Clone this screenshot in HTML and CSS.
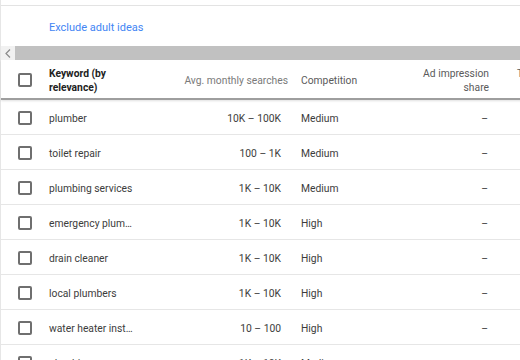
FILE: index.html
```html
<!DOCTYPE html>
<html lang="en">
  <head>
    <meta charset="UTF-8" />
    <meta name="viewport" content="width=device-width, initial-scale=1.0" />
    <title>Keyword ideas</title>
    <link rel="stylesheet" href="styles.css">
  </head>
  <body>
    <div class="panel">
      <div class="filters">
        <a class="link" href="#">Exclude adult ideas</a>
      </div>

      <div class="hscroll">
        <div class="hscroll-btn">
          <svg width="6" height="9" viewBox="0 0 6 9"><path d="M5 0.5 L1 4.5 L5 8.5" fill="none" stroke="#8a8a8a" stroke-width="1.2"/></svg>
        </div>
        <div class="hscroll-thumb"></div>
      </div>

      <div class="table">
        <div class="row head">
          <div class="cell check"><span class="box"></span></div>
          <div class="cell kw sorted">Keyword (by<br>relevance)</div>
          <div class="cell num searches">Avg. monthly searches</div>
          <div class="cell comp">Competition</div>
          <div class="cell num share">Ad impression<br>share</div>
          <div class="cell rest"><span class="rest-label">Top of page bid (low<br>range)</span></div>
        </div>

        <div class="row">
          <div class="cell check"><span class="box"></span></div>
          <div class="cell kw">plumber</div>
          <div class="cell num">10K – 100K</div>
          <div class="cell comp">Medium</div>
          <div class="cell num share">–</div>
          <div class="cell rest"></div>
        </div>
        <div class="row">
          <div class="cell check"><span class="box"></span></div>
          <div class="cell kw">toilet repair</div>
          <div class="cell num">100 – 1K</div>
          <div class="cell comp">Medium</div>
          <div class="cell num share">–</div>
          <div class="cell rest"></div>
        </div>
        <div class="row">
          <div class="cell check"><span class="box"></span></div>
          <div class="cell kw">plumbing services</div>
          <div class="cell num">1K – 10K</div>
          <div class="cell comp">Medium</div>
          <div class="cell num share">–</div>
          <div class="cell rest"></div>
        </div>
        <div class="row">
          <div class="cell check"><span class="box"></span></div>
          <div class="cell kw">emergency plum…</div>
          <div class="cell num">1K – 10K</div>
          <div class="cell comp">High</div>
          <div class="cell num share">–</div>
          <div class="cell rest"></div>
        </div>
        <div class="row">
          <div class="cell check"><span class="box"></span></div>
          <div class="cell kw">drain cleaner</div>
          <div class="cell num">1K – 10K</div>
          <div class="cell comp">High</div>
          <div class="cell num share">–</div>
          <div class="cell rest"></div>
        </div>
        <div class="row">
          <div class="cell check"><span class="box"></span></div>
          <div class="cell kw">local plumbers</div>
          <div class="cell num">1K – 10K</div>
          <div class="cell comp">High</div>
          <div class="cell num share">–</div>
          <div class="cell rest"></div>
        </div>
        <div class="row">
          <div class="cell check"><span class="box"></span></div>
          <div class="cell kw">water heater inst…</div>
          <div class="cell num">10 – 100</div>
          <div class="cell comp">High</div>
          <div class="cell num share">–</div>
          <div class="cell rest"></div>
        </div>
        <div class="row">
          <div class="cell check"><span class="box"></span></div>
          <div class="cell kw">plumbing</div>
          <div class="cell num">1K – 10K</div>
          <div class="cell comp">Medium</div>
          <div class="cell num share">–</div>
          <div class="cell rest"></div>
        </div>
      </div>
    </div>
  </body>
</html>
```

FILE: styles.css
```css
body {
  margin: 0;
  font-family: Roboto, "Liberation Sans", sans-serif;
  font-size: 10.3px;
  color: #3c3c3c;
  background: #ffffff;
  overflow: hidden;
}

.panel {
  width: 620px;
  border-left: 1px solid #e6e6e6;
  padding-top: 5px;
}

.filters {
  border-top: 1px solid #e3e3e3;
  height: 40px;
  display: flex;
  align-items: center;
  padding-left: 48px;
}

.link {
  color: #4285f4;
  text-decoration: none;
  font-size: 11px;
  padding-top: 2px;
}

.hscroll {
  display: flex;
  height: 14px;
}

.hscroll-btn {
  width: 14px;
  background: #f1f1f1;
  display: flex;
  align-items: center;
  justify-content: center;
}

.hscroll-thumb {
  flex: 1;
  background: #c1c1c1;
}

.row {
  display: grid;
  grid-template-columns: 48px 134px 106px 111px 97px 124px;
  height: 32px;
  padding-top: 2px;
  border-bottom: 1px solid #e6e6e6;
  align-items: center;
}

.row.head {
  height: 35px;
  padding-top: 3px;
  border-bottom: 2px solid #9e9e9e;
  box-shadow: 0 1px 2px rgba(0, 0, 0, 0.12);
  line-height: 14px;
  color: #666666;
}

.cell {
  white-space: nowrap;
}

.check {
  padding-left: 17px;
  display: flex;
}

.row .check {
  margin-top: -1px;
}

.head .check {
  margin-top: -1px;
}

.box {
  width: 10px;
  height: 10px;
  border: 2px solid #6f6f6f;
  border-radius: 2px;
}

.kw.sorted {
  font-weight: bold;
  color: #222222;
}

.num {
  text-align: right;
  padding-right: 8px;
}

.head .searches {
  padding-right: 1px;
  color: #7a7a7a;
}

.comp {
  padding-left: 12px;
}

.head .comp,
.head .share,
.head .rest {
  color: #5a5a5a;
}

.row .share {
  padding-right: 9px;
}

.head .share {
  padding-right: 8px;
}

.rest {
  padding-left: 20px;
}

.rest-label {
  display: inline-block;
  text-align: right;
}
```
